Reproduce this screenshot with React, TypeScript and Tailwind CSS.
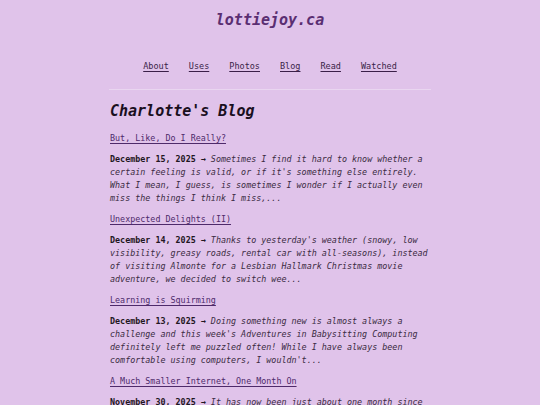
const posts = [
  {
    title: "But, Like, Do I Really?",
    date: "December 15, 2025",
    excerpt:
      "Sometimes I find it hard to know whether a certain feeling is valid, or if it's something else entirely. What I mean, I guess, is sometimes I wonder if I actually even miss the things I think I miss,...",
  },
  {
    title: "Unexpected Delights (II)",
    date: "December 14, 2025",
    excerpt:
      "Thanks to yesterday's weather (snowy, low visibility, greasy roads, rental car with all-seasons), instead of visiting Almonte for a Lesbian Hallmark Christmas movie adventure, we decided to switch wee...",
  },
  {
    title: "Learning is Squirming",
    date: "December 13, 2025",
    excerpt:
      "Doing something new is almost always a challenge and this week's Adventures in Babysitting Computing definitely left me puzzled often! While I have always been comfortable using computers, I wouldn't...",
  },
  {
    title: "A Much Smaller Internet, One Month On",
    date: "November 30, 2025",
    excerpt:
      "It has now been just about one month since I decided to step away from the big social platforms and spend my time on a smaller, quieter web instead...",
  },
];

const navItems = ["About", "Uses", "Photos", "Blog", "Read", "Watched"];

export default function App() {
  return (
    <div className="min-h-screen bg-[#e0c3ea] font-['DejaVu_Sans_Mono',monospace] text-[#1f1622]">
      {/* 헤더 */}
      <header className="pt-[8px] text-center">
        <a href="#" className="text-[15px] leading-[20px] font-bold italic text-[#5a2e72]">
          lottiejoy.ca
        </a>
      </header>

      <nav className="mt-[28px] flex justify-center gap-[20px] text-[8.5px] leading-[13px]">
        {navItems.map((item) => (
          <a key={item} href="#" className="text-[#3a1f48] underline underline-offset-2">
            {item}
          </a>
        ))}
      </nav>

      <hr className="mx-auto mt-[16px] w-[322px] border-0 border-t border-[#e9d6f0]" />

      <main className="mx-auto mt-[11px] w-[320px]">
        <h1 className="text-[15px] leading-[20px] font-bold italic text-[#1a0f1e]">Charlotte's Blog</h1>

        <div className="mt-[11px] flex flex-col gap-[7.5px] text-[8.4px] leading-[13.2px]">
          {posts.map((post) => (
            <div key={post.title} className="flex flex-col gap-[7.5px]">
              <a href="#" className="self-start text-[#4e2a6a] underline underline-offset-2">
                {post.title}
              </a>
              <p>
                <span className="font-bold">{post.date} →</span>{" "}
                <em className="text-[#3b2b42]">{post.excerpt}</em>
              </p>
            </div>
          ))}
        </div>
      </main>
    </div>
  );
}
